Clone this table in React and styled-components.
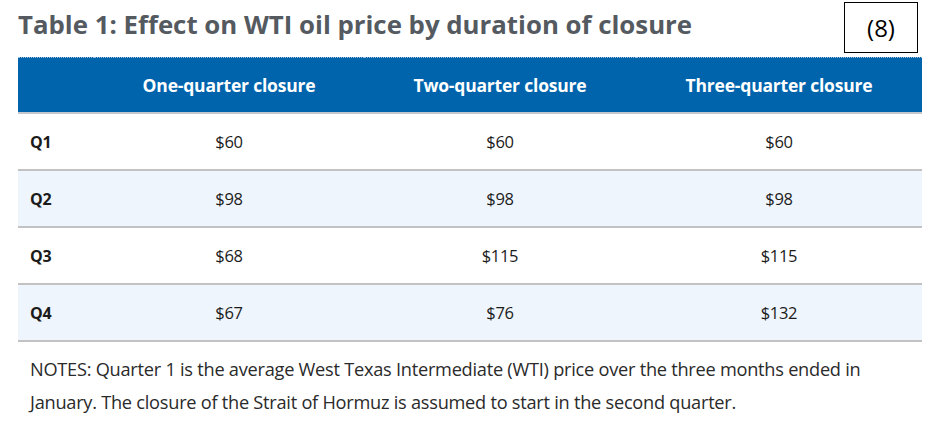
import React from 'react';
import styled, { createGlobalStyle } from 'styled-components';

const GlobalStyle = createGlobalStyle`
  html, body {
    margin: 0;
    padding: 0;
    background: #ffffff;
  }
  body {
    width: 932px;
    height: 434px;
    overflow: hidden;
    font-family: "Open Sans", "Liberation Sans", sans-serif;
  }
`;

const Page = styled.div`
  display: flex;
  flex-direction: column;
  padding: 2px 10px 0 18px;
`;

const TitleBar = styled.div`
  display: flex;
  justify-content: space-between;
  align-items: flex-start;
  height: 54px;
`;

const Title = styled.h1`
  margin: 4px 0 0 0;
  font-family: "Open Sans", "Liberation Sans", sans-serif;
  font-size: 25.8px;
  font-weight: 700;
  letter-spacing: 0;
  color: #545a5f;
`;

const NumberBox = styled.div`
  width: 72px;
  height: 49px;
  margin-right: 4px;
  border: 1.5px solid #000;
  display: flex;
  align-items: center;
  justify-content: center;
  font-family: "Open Sans", "Liberation Sans", sans-serif;
  font-size: 24px;
  color: #000;
`;

const Table = styled.div`
  width: 904px;
  display: grid;
  grid-template-columns: 76px 270px 272px 286px;
`;

const HeaderRow = styled.div`
  display: contents;
`;

const HeaderCell = styled.div`
  height: 54px;
  margin-top: 1px;
  background: #0064ad;
  border-top: 1px dotted #9cc0e0;
  border-bottom: 2px solid #c4c8cc;
  display: flex;
  align-items: center;
  justify-content: center;
  color: #ffffff;
  font-size: 17.5px;
  font-weight: 700;
  letter-spacing: -0.2px;
`;

const Cell = styled.div`
  height: 55px;
  display: flex;
  align-items: center;
  justify-content: ${(p) => (p.$label ? 'flex-start' : 'center')};
  padding-left: ${(p) => (p.$label ? '12px' : '0')};
  background: ${(p) => (p.$shade ? '#eef5fc' : '#ffffff')};
  border-bottom: 2px solid #c2c2c2;
  color: #1b1b1b;
  font-size: ${(p) => (p.$label ? '16px' : '16.5px')};
  font-weight: ${(p) => (p.$label ? 700 : 400)};
  letter-spacing: -0.3px;
`;

const Notes = styled.p`
  margin: 11px 0 0 12px;
  width: 880px;
  font-size: 18.2px;
  line-height: 33px;
  letter-spacing: -0.25px;
  color: #2a2a2a;
`;

const headers = ['', 'One-quarter closure', 'Two-quarter closure', 'Three-quarter closure'];

const rows = [
  ['Q1', '$60', '$60', '$60'],
  ['Q2', '$98', '$98', '$98'],
  ['Q3', '$68', '$115', '$115'],
  ['Q4', '$67', '$76', '$132'],
];

export default function App() {
  return (
    <>
      <GlobalStyle />
      <Page>
        <TitleBar>
          <Title>Table 1: Effect on WTI oil price by duration of closure</Title>
          <NumberBox>(8)</NumberBox>
        </TitleBar>
        <Table>
          <HeaderRow>
            {headers.map((h, i) => (
              <HeaderCell key={i}>{h}</HeaderCell>
            ))}
          </HeaderRow>
          {rows.map((row, r) =>
            row.map((v, c) => (
              <Cell key={`${r}-${c}`} $label={c === 0} $shade={r % 2 === 1}>
                {v}
              </Cell>
            ))
          )}
        </Table>
        <Notes>
          NOTES: Quarter 1 is the average West Texas Intermediate (WTI) price over the three months ended in
          January. The closure of the Strait of Hormuz is assumed to start in the second quarter.
        </Notes>
      </Page>
    </>
  );
}
